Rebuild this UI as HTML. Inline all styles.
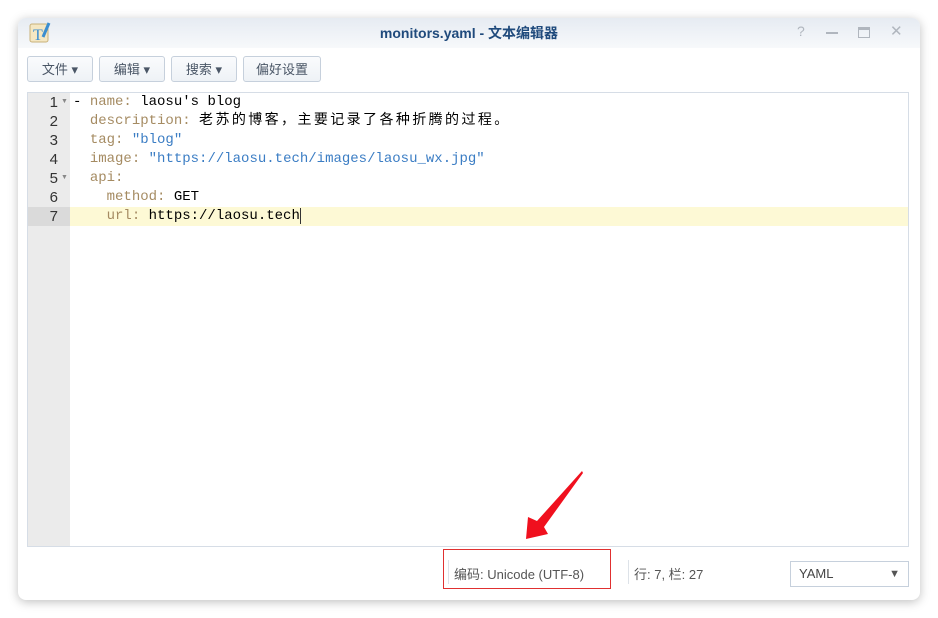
<!DOCTYPE html>
<html><head><meta charset="utf-8"><style>
body{margin:0;width:938px;height:618px;background:#fff;position:relative;overflow:hidden;font-family:"Liberation Sans","Noto Sans CJK SC",sans-serif}
.win{position:absolute;left:18px;top:18px;width:902px;height:582px;background:#fff;border-radius:8px;box-shadow:0 2px 10px rgba(0,0,0,.25)}
.title{position:absolute;left:0;top:0;width:902px;height:30px;border-radius:8px 8px 0 0;background:linear-gradient(#e6ebf2,#f7f9fb)}
.title .t{position:absolute;left:0;right:0;top:5px;text-align:center;font-weight:bold;font-size:14px;color:#1f4a7c}
.btn{position:absolute;top:38px;height:26px;border:1px solid #c6d0dc;border-radius:3px;background:linear-gradient(#fafbfd,#eef2f6);font-size:13px;color:#4a5666;line-height:26px;text-align:center;box-sizing:border-box}
.ed{position:absolute;left:9px;top:74px;width:882px;height:455px;border:1px solid #d6dde6;box-sizing:border-box;background:#fff}
.gut{position:absolute;left:0;top:0;width:42px;height:453px;background:#ebebeb}
.ln{position:absolute;left:0;width:30px;text-align:right;font:15px "Liberation Sans",sans-serif;color:#333;line-height:19px}
.cl{position:absolute;left:45px;font:14px "Liberation Mono","Noto Sans CJK SC",monospace;color:#000;white-space:pre;line-height:19px}
.k{color:#a58b62}.s{color:#3b7dc4}
.fold{font-size:7px;color:#888;position:absolute;left:33px}
</style></head><body>
<div class="win">
 <div class="title"><div class="t">monitors.yaml - 文本编辑器</div>
  <svg style="position:absolute;left:10px;top:3px" width="24" height="24"><rect x="2" y="3" width="18" height="18" rx="2" fill="#f4e7c3" stroke="#c9b27a"/><text x="5" y="19" font-family="Liberation Serif" font-size="16" fill="#3b8ed0">T</text><path d="M15 16 L21 2" stroke="#3b8ed0" stroke-width="3"/></svg>
  <div style="position:absolute;left:779px;top:5px;font-size:14px;color:#b0b6be">?</div>
  <div style="position:absolute;left:808px;top:14px;width:12px;height:1.5px;background:#b0b6be"></div>
  <div style="position:absolute;left:840px;top:9px;width:10px;height:7px;border:1.5px solid #b0b6be;border-top-width:3px"></div>
  <div style="position:absolute;left:872px;top:4px;font-size:15px;color:#b0b6be">✕</div>
 </div>
 <div class="btn" style="left:9px;width:66px">文件 ▾</div>
 <div class="btn" style="left:81px;width:66px">编辑 ▾</div>
 <div class="btn" style="left:153px;width:66px">搜索 ▾</div>
 <div class="btn" style="left:225px;width:78px">偏好设置</div>
 <div class="ed">
  <div class="gut"></div>
  <div style="position:absolute;left:0;top:114px;width:42px;height:19px;background:#dadada"></div>
  <div style="position:absolute;left:42px;top:114px;width:838px;height:19px;background:#fdf9d5"></div>
  <div class="ln" style="top:0">1</div><div class="fold" style="top:5px">▼</div>
  <div class="ln" style="top:19px">2</div>
  <div class="ln" style="top:38px">3</div>
  <div class="ln" style="top:57px">4</div>
  <div class="ln" style="top:76px">5</div><div class="fold" style="top:81px">▼</div>
  <div class="ln" style="top:95px">6</div>
  <div class="ln" style="top:114px">7</div>
  <div class="cl" style="top:0">- <span class="k">name:</span> laosu's blog</div>
  <div class="cl" style="top:19px">  <span class="k">description:</span> <span style="letter-spacing:2.4px">老苏的博客，主要记录了各种折腾的过程。</span></div>
  <div class="cl" style="top:38px">  <span class="k">tag:</span> <span class="s">"blog"</span></div>
  <div class="cl" style="top:57px">  <span class="k">image:</span> <span class="s">"https://laosu.tech/images/laosu_wx.jpg"</span></div>
  <div class="cl" style="top:76px">  <span class="k">api:</span></div>
  <div class="cl" style="top:95px">    <span class="k">method:</span> GET</div>
  <div class="cl" style="top:114px">    <span class="k">url:</span> https://laosu.tech<span style="border-left:1px solid #333"></span></div>
 </div>
 <div style="position:absolute;left:425px;top:531px;width:168px;height:40px;border:1px solid #e03030;box-sizing:border-box"></div>
 <div style="position:absolute;left:430px;top:542px;width:1px;height:24px;background:#dde2e8"></div>
 <div style="position:absolute;left:436px;top:546px;font-size:13px;color:#555">编码: Unicode (UTF-8)</div>
 <div style="position:absolute;left:610px;top:542px;width:1px;height:24px;background:#dde2e8"></div>
 <div style="position:absolute;left:616px;top:546px;font-size:13px;color:#555">行: 7, 栏: 27</div>
 <div style="position:absolute;left:772px;top:543px;width:119px;height:26px;border:1px solid #c6d0dc;box-sizing:border-box;font-size:13px;color:#444;line-height:24px;padding-left:8px">YAML<span style="position:absolute;right:8px;top:0;font-size:11px;color:#555">▼</span></div>
</div>
<svg style="position:absolute;left:0;top:0" width="938" height="618"><polygon points="582,471 583,473 544,527 548,534 526,539 528,517 537,521" fill="#f0101e"/></svg>
</body></html>
